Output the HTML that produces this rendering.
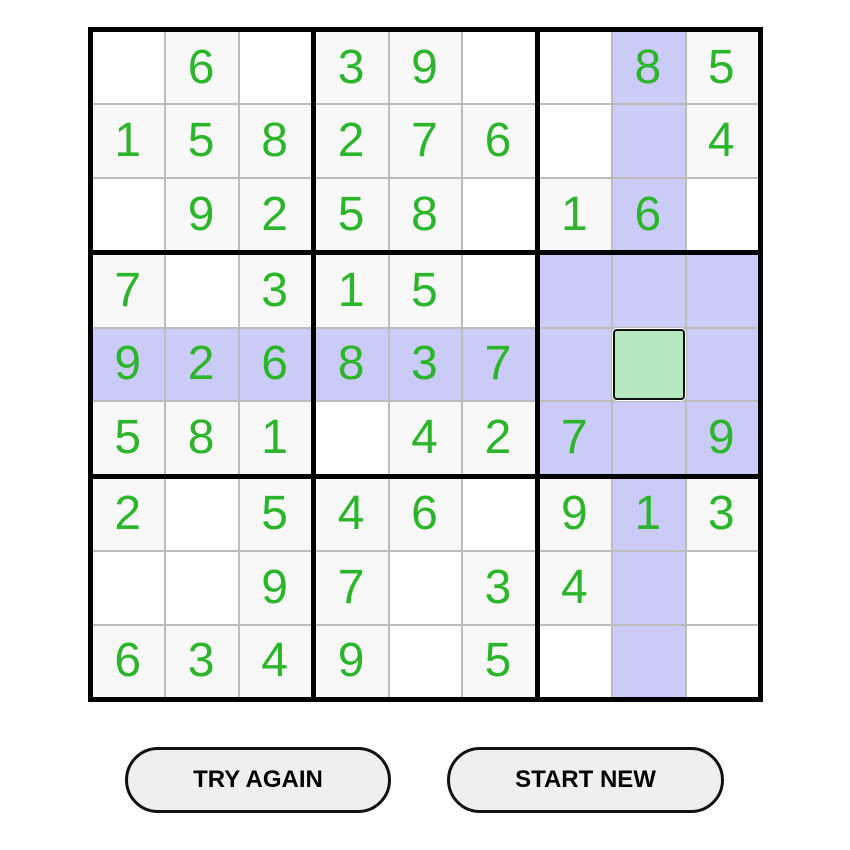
<!DOCTYPE html>
<html><head><style>
html,body{margin:0;padding:0;background:#fff;width:850px;height:850px;overflow:hidden}
#g{position:absolute;left:88px;top:27px;width:675px;height:675px;background:#000;box-sizing:border-box;padding:5px;display:grid;grid-template-columns:repeat(3,1fr);grid-template-rows:repeat(3,1fr);gap:5px}
.b{display:grid;grid-template-columns:repeat(3,1fr);grid-template-rows:repeat(3,1fr);gap:2px;background:#bcbcbc}
.b div{background:#fff;color:#2ab52a;font:48px "Liberation Sans",Arial,sans-serif;display:flex;align-items:center;justify-content:center;line-height:1;padding-right:2px}
.b .f{background:#f8f8f8}
.b .h{background:#cbcbf8}
.b .s{background:#b8e8c0;border:2px solid #111;border-radius:4px;box-shadow:0 0 0 1px #fff}
.btn{position:absolute;top:747px;height:66px;box-sizing:border-box;border:3px solid #111;border-radius:33px;background:#efefef;font:bold 24px "Liberation Sans",Arial,sans-serif;color:#000;display:flex;align-items:center;justify-content:center}
</style></head><body>
<div id="g">
<div class="b"><div></div><div class="f">6</div><div></div><div class="f">1</div><div class="f">5</div><div class="f">8</div><div></div><div class="f">9</div><div class="f">2</div></div>
<div class="b"><div class="f">3</div><div class="f">9</div><div></div><div class="f">2</div><div class="f">7</div><div class="f">6</div><div class="f">5</div><div class="f">8</div><div></div></div>
<div class="b"><div></div><div class="h">8</div><div class="f">5</div><div></div><div class="h"></div><div class="f">4</div><div class="f">1</div><div class="h">6</div><div></div></div>
<div class="b"><div class="f">7</div><div></div><div class="f">3</div><div class="h">9</div><div class="h">2</div><div class="h">6</div><div class="f">5</div><div class="f">8</div><div class="f">1</div></div>
<div class="b"><div class="f">1</div><div class="f">5</div><div></div><div class="h">8</div><div class="h">3</div><div class="h">7</div><div></div><div class="f">4</div><div class="f">2</div></div>
<div class="b"><div class="h"></div><div class="h"></div><div class="h"></div><div class="h"></div><div class="s"></div><div class="h"></div><div class="h">7</div><div class="h"></div><div class="h">9</div></div>
<div class="b"><div class="f">2</div><div></div><div class="f">5</div><div></div><div></div><div class="f">9</div><div class="f">6</div><div class="f">3</div><div class="f">4</div></div>
<div class="b"><div class="f">4</div><div class="f">6</div><div></div><div class="f">7</div><div></div><div class="f">3</div><div class="f">9</div><div></div><div class="f">5</div></div>
<div class="b"><div class="f">9</div><div class="h">1</div><div class="f">3</div><div class="f">4</div><div class="h"></div><div></div><div></div><div class="h"></div><div></div></div>
</div>
<div class="btn" style="left:125px;width:266px">TRY AGAIN</div>
<div class="btn" style="left:447px;width:277px">START NEW</div>
</body></html>
